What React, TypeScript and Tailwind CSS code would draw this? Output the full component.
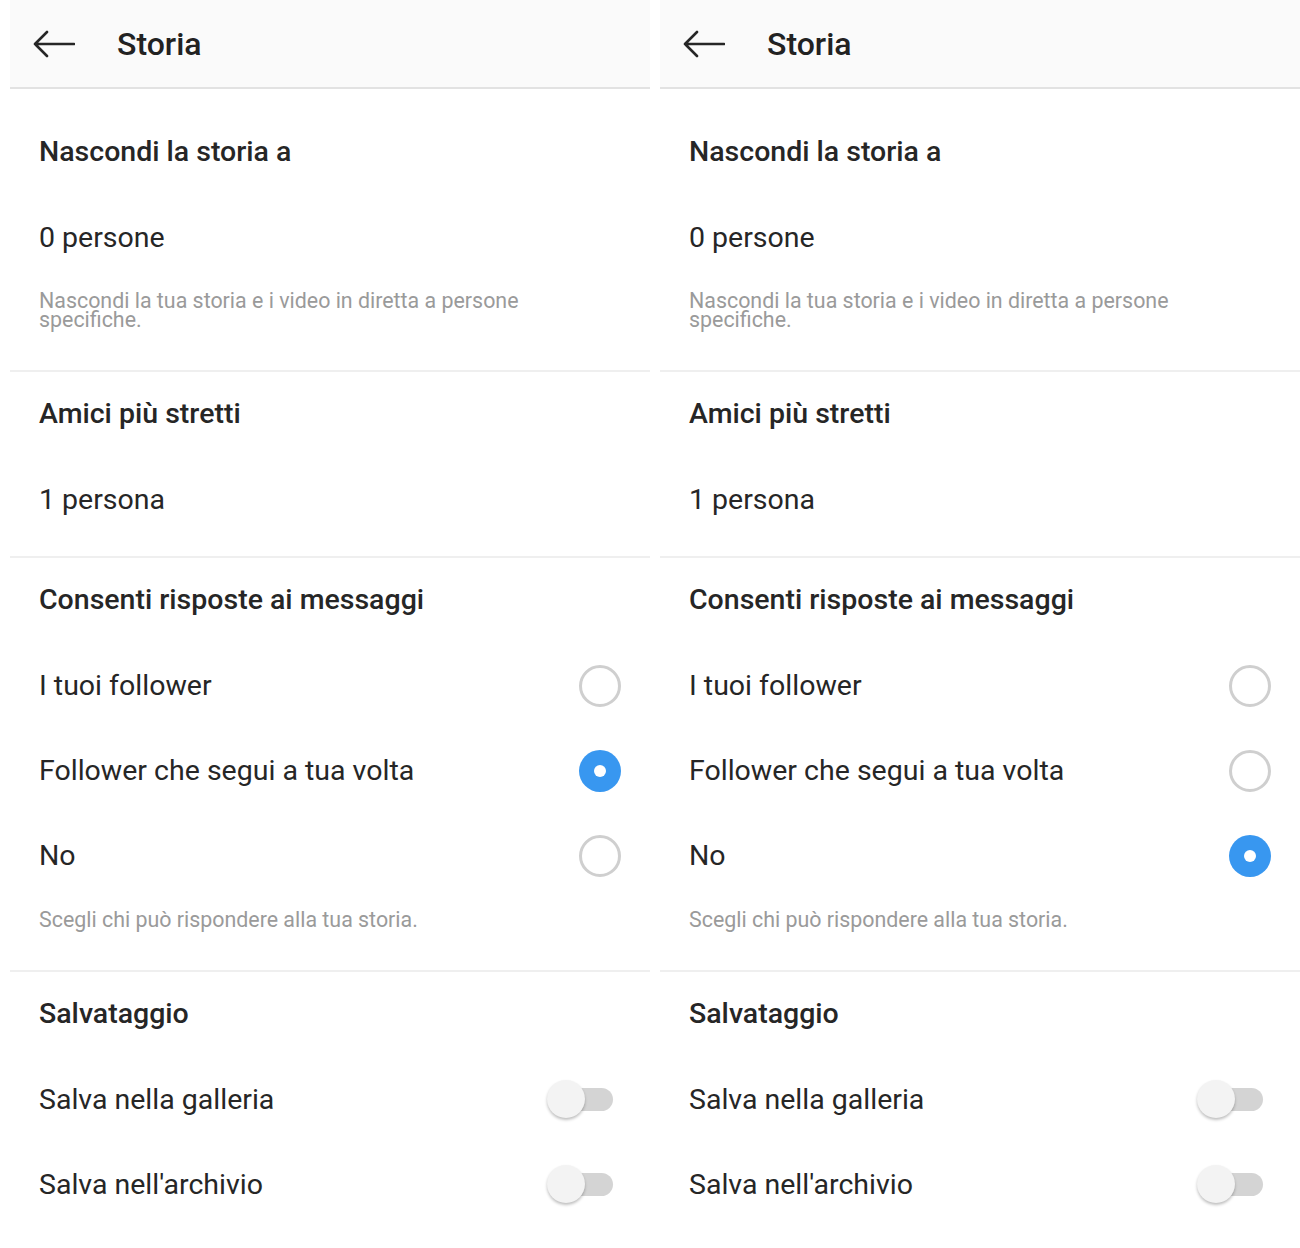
import React from 'react';

type Reply = 'all' | 'mutual' | 'none';

const BackArrow = () => (
  <svg width="43" height="28" viewBox="0 0 43 28" fill="none" className="shrink-0">
    <path d="M42 14H3M15 2L3 14l12 12" stroke="#262626" strokeWidth="2.6" strokeLinecap="round" strokeLinejoin="round" />
  </svg>
);

const Radio = ({ checked }: { checked: boolean }) =>
  checked ? (
    <div className="w-[42px] h-[42px] rounded-full bg-[#3897f0] flex items-center justify-center">
      <div className="w-[12px] h-[12px] rounded-full bg-white" />
    </div>
  ) : (
    <div className="w-[42px] h-[42px] rounded-full border-[3px] border-[#cfcfcf]" />
  );

const Toggle = () => (
  <div className="relative w-[66px] h-[38px] mr-[8px] -mt-[2px]">
    <div className="absolute left-[10px] right-0 top-[8px] h-[23px] rounded-full bg-[#d4d4d4]" />
    <div className="absolute left-0 top-0 w-[38px] h-[38px] rounded-full bg-[#f3f3f3] shadow-[0_2px_3px_rgba(0,0,0,0.25)]" />
  </div>
);

const Divider = () => <div className="h-[2px] bg-[#efefef]" />;

const Heading = ({ children }: { children: React.ReactNode }) => (
  <div className="h-[85px] flex items-center px-[29px] text-[28.5px] font-medium text-[#262626]">{children}</div>
);

const Row = ({ label, right }: { label: string; right?: React.ReactNode }) => (
  <div className="h-[85px] flex items-center justify-between pt-[1px] px-[29px] text-[28.5px] text-[#262626]">
    <span>{label}</span>
    {right}
  </div>
);

const Note = ({ children, top }: { children: React.ReactNode; top: string }) => (
  <p className={`px-[29px] pb-[41px] text-[21.4px] leading-[19px] text-[#9a9a9a] max-w-[540px] ${top}`}>{children}</p>
);

const Screen = ({ reply }: { reply: Reply }) => (
  <div className="w-[640px] shrink-0 bg-white">
    <div className="h-[89px] bg-[#fafafa] border-b-2 border-[#e2e2e2] flex items-center pl-[22px]">
      <BackArrow />
      <span className="ml-[42px] text-[32px] font-medium text-[#222222]">Storia</span>
    </div>

    <div className="pt-[21px]">
      <Heading>Nascondi la storia a</Heading>
      <Row label="0 persone" />
      <Note top="pt-[11px]">Nascondi la tua storia e i video in diretta a persone specifiche.</Note>
    </div>
    <Divider />

    <div className="pb-[14px]">
      <Heading>Amici più stretti</Heading>
      <Row label="1 persona" />
    </div>
    <Divider />

    <div>
      <Heading>Consenti risposte ai messaggi</Heading>
      <Row label="I tuoi follower" right={<Radio checked={reply === 'all'} />} />
      <Row label="Follower che segui a tua volta" right={<Radio checked={reply === 'mutual'} />} />
      <Row label="No" right={<Radio checked={reply === 'none'} />} />
      <Note top="pt-[12px]">Scegli chi può rispondere alla tua storia.</Note>
    </div>
    <Divider />

    <div>
      <Heading>Salvataggio</Heading>
      <Row label="Salva nella galleria" right={<Toggle />} />
      <Row label="Salva nell'archivio" right={<Toggle />} />
    </div>
  </div>
);

export default function App() {
  return (
    <div className="w-[1300px] h-[1248px] overflow-hidden bg-white flex gap-[10px] pl-[10px] font-['Roboto',sans-serif]">
      <Screen reply="mutual" />
      <Screen reply="none" />
    </div>
  );
}
